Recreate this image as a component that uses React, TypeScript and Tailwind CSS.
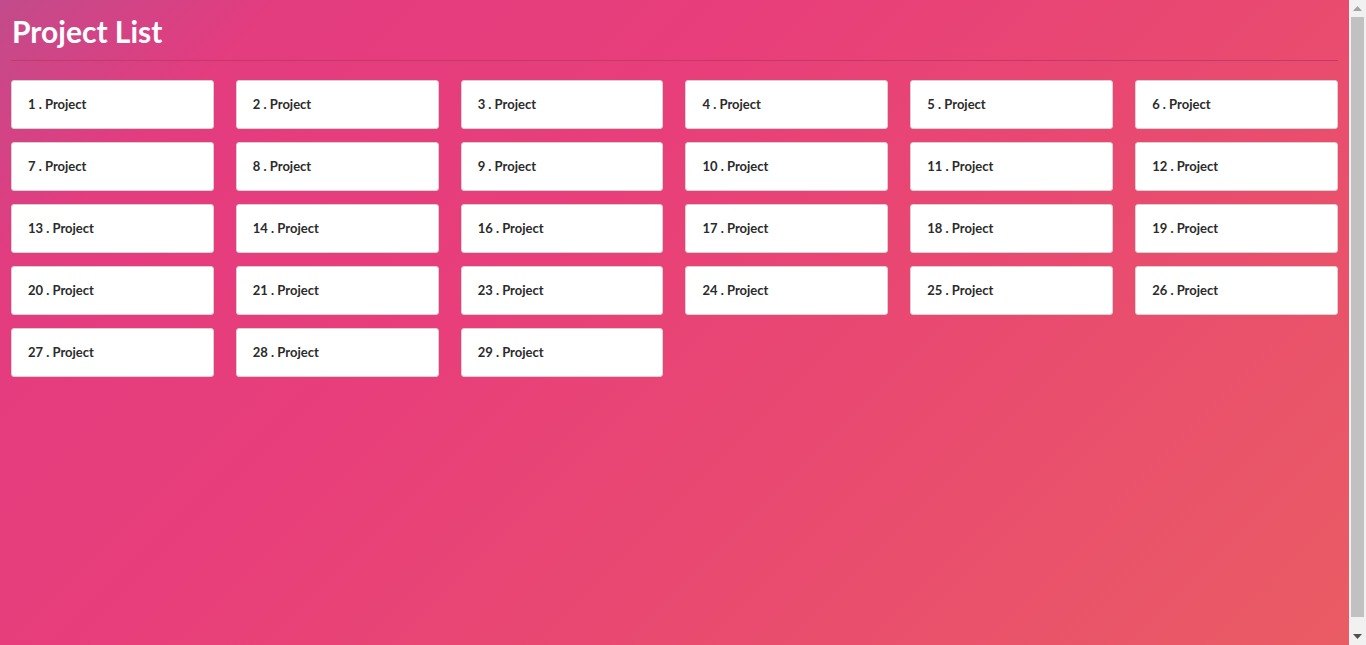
const projects = [1, 2, 3, 4, 5, 6, 7, 8, 9, 10, 11, 12, 13, 14, 16, 17, 18, 19, 20, 21, 23, 24, 25, 26, 27, 28, 29]

function ProjectCard({ num }: { num: number }) {
  return (
    <div className="h-[49px] flex items-center px-4 bg-white border border-[#d3d3d3] rounded-[3px]">
      <span className="text-[13px] font-bold text-[#2b2b2b]">{num} . Project</span>
    </div>
  )
}

// browser scrollbar, as seen in the screenshot
function Scrollbar() {
  return (
    <div className="w-[17px] h-full flex flex-col bg-[#f1f1f1]">
      <div className="h-[17px] flex items-center justify-center">
        <svg width="9" height="5" viewBox="0 0 9 5">
          <path d="M0 5 L4.5 0 L9 5 Z" fill="#a3a3a3" />
        </svg>
      </div>
      <div className="flex-1 px-[2px]">
        <div className="h-[600px] bg-[#c1c1c1]" />
      </div>
      <div className="h-[17px] flex items-center justify-center">
        <svg width="9" height="5" viewBox="0 0 9 5">
          <path d="M0 0 L9 0 L4.5 5 Z" fill="#505050" />
        </svg>
      </div>
    </div>
  )
}

export default function App() {
  return (
    <div className="h-screen flex overflow-hidden" style={{ fontFamily: 'Lato, "Noto Sans", sans-serif' }}>
      <div className="flex-1 px-[11px] pt-[13px] bg-[linear-gradient(135deg,#c24b8b_0%,#e33c7f_14%,#e83e7b_38%,#e94b6f_67%,#ea5c64_100%)]">
        <h1 className="text-[30px] leading-[37px] font-bold text-white pl-px">Project List</h1>
        <div className="mt-[10px] border-t border-[#c23a66]" />

        {/* Cards */}
        <div className="mt-[19px] grid grid-cols-6 gap-x-[22px] gap-y-[13px]">
          {projects.map((n) => (
            <ProjectCard key={n} num={n} />
          ))}
        </div>
      </div>
      <Scrollbar />
    </div>
  )
}
